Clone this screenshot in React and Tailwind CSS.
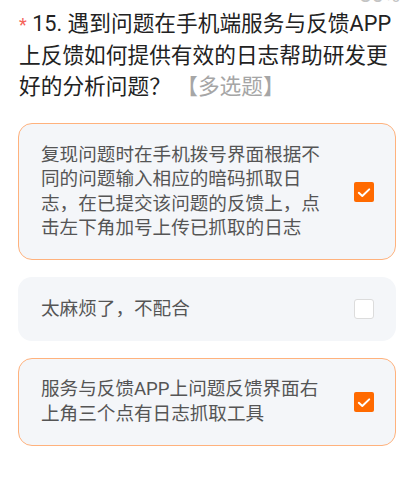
import React from "react";

function Check({ checked }) {
  if (checked) {
    return (
      <div className="w-[20px] h-[20px] shrink-0 rounded-[2px] bg-[#ff6a00] flex items-center justify-center">
        <svg width="20" height="20" viewBox="0 0 20 20" fill="none">
          <path d="M4.8 10.8 L8.3 14 L15.2 7.4" stroke="#fff" strokeWidth="2" strokeLinecap="round" strokeLinejoin="round" />
        </svg>
      </div>
    );
  }
  return <div className="w-[20px] h-[20px] shrink-0 rounded-[3px] bg-white border border-[#dcdcdc]" />;
}

function Option({ text, checked }) {
  return (
    <div
      className={
        "mx-[18px] rounded-[14px] border bg-[#f4f6f9] flex items-center pl-[22px] pr-[21px] py-[18.5px] gap-[28px] " +
        (checked ? "border-[#ffb27d]" : "border-transparent")
      }
    >
      <div className="flex-1 text-[18.6px] leading-[24.5px] text-[#555555]">{text}</div>
      <Check checked={checked} />
    </div>
  );
}

export default function App() {
  return (
    <div className="w-[414px] h-[492px] bg-white overflow-hidden font-['Roboto','Noto_Sans_CJK_SC',sans-serif]">
      <div className="h-[4px] overflow-hidden flex justify-end pr-[14px]">
        <div className="-mt-[18px] text-[22px] leading-[26px] text-[#c4c4c4]">80%</div>
      </div>
      <div className="mt-[4px] pl-[19px] pr-[20px] text-[21.7px] leading-[31px] text-[#222222]">
        <span className="text-[#f5645a] text-[18px]">*</span> 15. 遇到问题在手机端服务与反馈APP上反馈如何提供有效的日志帮助研发更好的分析问题？
        <span className="text-[#a6a6a6]"> 【多选题】</span>
      </div>
      <div className="mt-[21px] flex flex-col gap-[17px]">
        <Option checked text="复现问题时在手机拨号界面根据不同的问题输入相应的暗码抓取日志，在已提交该问题的反馈上，点击左下角加号上传已抓取的日志" />
        <Option checked={false} text="太麻烦了，不配合" />
        <Option checked text="服务与反馈APP上问题反馈界面右上角三个点有日志抓取工具" />
      </div>
    </div>
  );
}
